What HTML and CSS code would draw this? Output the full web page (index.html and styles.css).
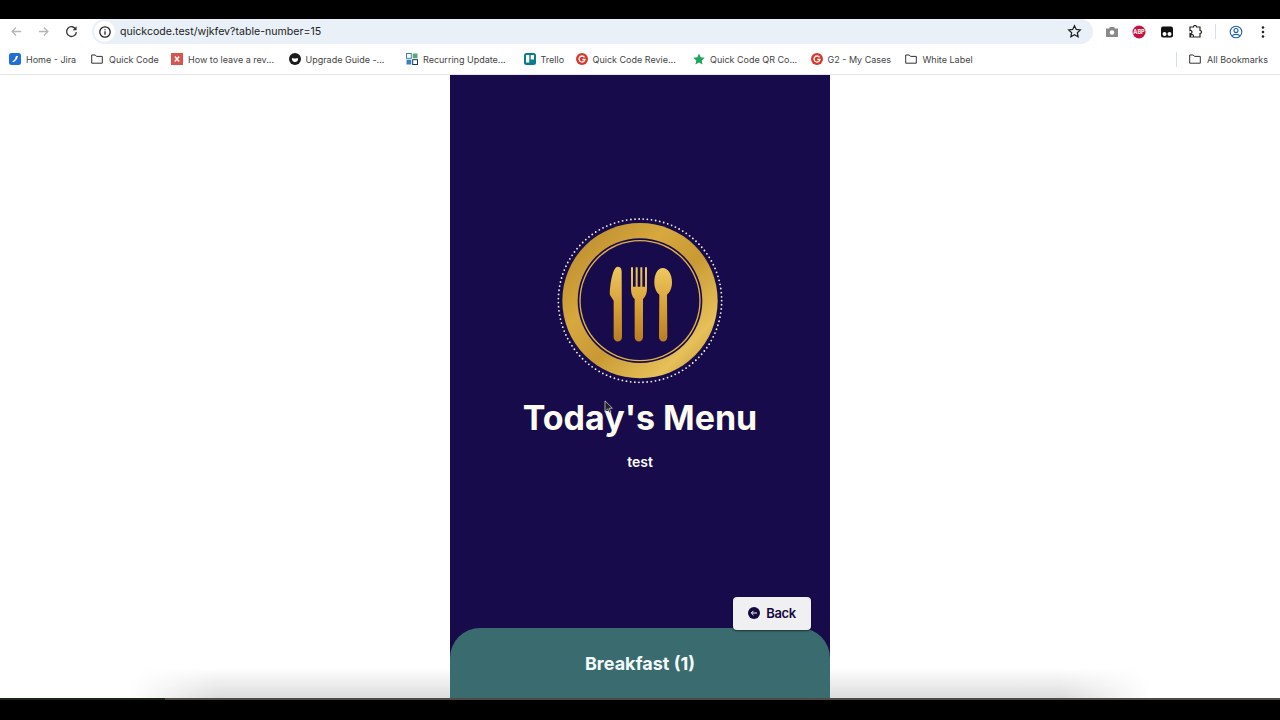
FILE: index.html
```html
<!DOCTYPE html>
<html lang="en">
<head>
    <meta charset="UTF-8">
    <meta name="viewport" content="width=device-width, initial-scale=1.0">
    <title>Today's Menu</title>
    <link rel="stylesheet" href="styles.css">
</head>
<body>
    <div class="black-bar top"></div>

    <div class="toolbar">
        <svg class="nav-icon back-arrow" viewBox="0 0 16 16"><path d="M13 8H3.5M7.5 3.8 3.3 8l4.2 4.2" /></svg>
        <svg class="nav-icon fwd-arrow" viewBox="0 0 16 16"><path d="M3 8h9.5M8.5 3.8 12.7 8l-4.2 4.2" /></svg>
        <svg class="nav-icon reload" viewBox="0 0 16 16"><path d="M12.6 5.6A5.2 5.2 0 1 0 13.2 8.6" /><path class="solid" d="M13.4 2.4v4.2H9.2z" /></svg>
        <div class="address">
            <span class="info-badge">
                <svg viewBox="0 0 14 14"><circle cx="7" cy="7" r="5.2" fill="none" stroke="#222" stroke-width="1.3" /><path d="M7 6.3v3.4M7 4.2v1" stroke="#222" stroke-width="1.3" /></svg>
            </span>
            <span class="url">quickcode.test/wjkfev?table-number=15</span>
            <svg class="star" viewBox="0 0 16 16"><path d="M8 1.8l1.9 4 4.3.5-3.2 3 .9 4.3L8 11.5l-3.9 2.1.9-4.3-3.2-3 4.3-.5z" /></svg>
        </div>
        <div class="extensions">
            <svg class="ext" viewBox="0 0 14 14"><path fill="#8a8a8a" d="M1 3.5h3L5 2h4l1 1.500h3v8.500H1z" /><circle cx="7" cy="7.500" r="2.300" fill="#fff" /></svg>
            <svg class="ext" viewBox="0 0 14 14"><circle cx="7" cy="7" r="6.500" fill="#c8103e" /><text x="7" y="9" class="abp">ABP</text></svg>
            <svg class="ext" viewBox="0 0 14 14"><rect x="1" y="1.500" width="12" height="11" rx="2" fill="#111" /><circle cx="4.500" cy="9" r="2" fill="#fff" /><circle cx="9.500" cy="9" r="2" fill="#fff" /></svg>
            <svg class="ext puzzle" viewBox="0 0 14 14"><path d="M2 2h3.500a1.500 1.500 0 0 1 3 0H12v3.500a1.500 1.500 0 0 1 0 3V12H5c.8-1 .5-2.500-1-2.500S2.200 11 3 12H2V8.500c1.200 .5 2-.5 2-1.500S3 5 2 5.500z" /></svg>
            <span class="vsep"></span>
            <svg class="ext profile" viewBox="0 0 14 14"><circle cx="7" cy="7" r="5.800" /><circle cx="7" cy="5.500" r="2" /><path d="M3.200 11c1-2.200 6.600-2.200 7.600 0" /></svg>
            <svg class="ext dots" viewBox="0 0 14 14"><circle cx="7" cy="2.500" r="1.300" /><circle cx="7" cy="7" r="1.300" /><circle cx="7" cy="11.500" r="1.300" /></svg>
        </div>
    </div>

    <div class="bookmarks">
        <a class="bm w-jira"><svg viewBox="0 0 12 12"><rect width="12" height="12" rx="2.500" fill="#1f6fd6" /><path d="M3 9l3-3 1-3 2 0-1 3-3 3z" fill="#fff" /></svg>Home - Jira</a>
        <a class="bm w-code"><svg class="folder" viewBox="0 0 12 12"><path d="M.7 2h3.600l1.200 1.400h5.800v6.800H.7z" /></svg>Quick Code</a>
        <a class="bm w-long"><svg viewBox="0 0 12 12"><rect width="12" height="12" fill="#d9534f" /><path d="M3.800 3.500l4.400 5M8.200 3.500l-4.400 5" stroke="#fff" stroke-width="1.500" /></svg>How to leave a rev...</a>
        <a class="bm w-long"><svg viewBox="0 0 12 12"><circle cx="6" cy="6" r="6" fill="#1b1b1b" /><path d="M3 5c1 .6 5 .6 6 0 .4 3-1.400 4-3 4S2.600 8 3 5z" fill="#fff" /></svg>Upgrade Guide -...</a>
        <a class="bm w-long"><svg viewBox="0 0 12 12"><rect x=".5" y=".5" width="4.800" height="4.800" fill="none" stroke="#3f7fb5" /><rect x="6.700" y=".5" width="4.800" height="4.800" fill="#5aa86f" /><rect x=".5" y="6.700" width="4.800" height="4.800" fill="#3f7fb5" /><rect x="6.700" y="6.700" width="4.800" height="4.800" fill="none" stroke="#17375e" /></svg>Recurring Update...</a>
        <a class="bm w-trello"><svg viewBox="0 0 12 12"><rect width="12" height="12" rx="2.500" fill="#0b7a8a" /><rect x="2" y="2" width="3.300" height="7.500" fill="#fff" /><rect x="6.700" y="2" width="3.300" height="4.500" fill="#fff" /></svg>Trello</a>
        <a class="bm w-long"><svg viewBox="0 0 12 12"><circle cx="6" cy="6" r="6" fill="#d8372c" /><path d="M8.500 4.300A3 3 0 1 0 9 6.500H6.300" fill="none" stroke="#fff" stroke-width="1.300" /></svg>Quick Code Revie...</a>
        <a class="bm w-long"><svg viewBox="0 0 12 12"><path d="M6 .5l1.700 3.800 4.100.4-3.100 2.700.9 4.100L6 9.400l-3.600 2.100.9-4.100L.2 4.700l4.100-.4z" fill="#1fa45b" /></svg>Quick Code QR Co...</a>
        <a class="bm w-g2"><svg viewBox="0 0 12 12"><circle cx="6" cy="6" r="6" fill="#d8372c" /><path d="M8.500 4.300A3 3 0 1 0 9 6.500H6.300" fill="none" stroke="#fff" stroke-width="1.300" /></svg>G2 - My Cases</a>
        <a class="bm"><svg class="folder" viewBox="0 0 12 12"><path d="M.7 2h3.600l1.200 1.400h5.800v6.800H.7z" /></svg>White Label</a>
        <span class="bm-right">
            <span class="vsep"></span>
            <a class="bm"><svg class="folder" viewBox="0 0 12 12"><path d="M.7 2h3.600l1.200 1.400h5.800v6.800H.7z" /></svg>All Bookmarks</a>
        </span>
    </div>

    <div class="viewport">
        <div class="window-shadow"></div>
        <main class="phone">
            <section class="hero">
                <svg class="logo" viewBox="0 0 540 540">
                    <defs>
                        <linearGradient id="gold" x1="0" y1="0" x2="1" y2="1">
                            <stop offset="0" stop-color="#b5852a" />
                            <stop offset=".35" stop-color="#d6a83e" />
                            <stop offset=".55" stop-color="#c99a34" />
                            <stop offset=".8" stop-color="#e6c05a" />
                            <stop offset="1" stop-color="#c18f2e" />
                        </linearGradient>
                        <linearGradient id="cutlery" x1="0" y1="0" x2="0" y2="1">
                            <stop offset="0" stop-color="#edc860" />
                            <stop offset=".5" stop-color="#d9a338" />
                            <stop offset="1" stop-color="#b97d24" />
                        </linearGradient>
                    </defs>
                    <circle cx="270" cy="272" r="245" fill="none" stroke="#f4efe6" stroke-width="5.500" stroke-linecap="round" stroke-dasharray="0 12.500" />
                    <circle cx="270" cy="272" r="233" fill="url(#gold)" />
                    <circle cx="270" cy="272" r="187" fill="#180b4b" />
                    <circle cx="270" cy="272" r="182" fill="#e0b050" />
                    <circle cx="270" cy="272" r="178" fill="#180b4b" />
                    <path fill="url(#cutlery)" d="M203 170c8 0 12 5 12 15l1 197a12.500 12.500 0 0 1-25 0V272l-11-17c-2-15 6-85 23-85z" />
                    <path fill="url(#cutlery)" d="M243 172h6v58h8v-58h6v58h8v-58h6v58h8v-58h6v62c0 18-6 28-12 33v115a12.500 12.500 0 0 1-25 0V267c-6-5-11-15-11-33z" />
                    <path fill="url(#cutlery)" d="M338 174c17 0 28 20 28 43 0 18-7 31-15 37l1 128a12.500 12.500 0 0 1-25 0l1-128c-8-6-15-19-15-37 0-23 9-43 25-43z" />
                </svg>
                <h1 class="title">Today's Menu</h1>
                <p class="subtitle">test</p>
            </section>
            <div class="back-row">
                <button class="back-btn" type="button">
                    <svg viewBox="0 0 12 12"><circle cx="6" cy="6" r="6" fill="#150a3f" /><path d="M9 6H3.500M5.500 3.800 3.300 6l2.200 2.200" fill="none" stroke="#fff" stroke-width="1" /></svg>
                    Back
                </button>
            </div>
            <section class="category">Breakfast (1)</section>
        </main>
        <svg class="cursor" viewBox="0 0 10 16"><path d="M1 1v12l3-3 2 4.500 1.800-.8-2-4.300H9.500z" fill="#222" stroke="#ddd" stroke-width=".8" /></svg>
    </div>

    <div class="black-bar bottom"></div>
</body>
</html>
```

FILE: styles.css
```css
* {
    box-sizing: border-box;
}
html, body {
    height: 100%;
}
body {
    margin: 0;
    width: 1280px;
    height: 720px;
    overflow: hidden;
    display: flex;
    flex-direction: column;
    background-color: white;
    font-family: Inter, "Noto Sans", sans-serif;
}
.black-bar {
    background-color: black;
}
.black-bar.top {
    height: 19px;
}
.black-bar.bottom {
    height: 22px;
    background: linear-gradient(to right, #1c2414 165px, #4f4a45 165px) top / 100% 2px no-repeat, black;
}

/* browser chrome */
.toolbar {
    height: 25px;
    display: flex;
    align-items: center;
    padding-left: 9px;
    background-color: white;
}
.nav-icon {
    width: 15px;
    height: 15px;
    margin-right: 12px;
    fill: none;
    stroke: #b3b7bb;
    stroke-width: 1.4;
}
.nav-icon.reload {
    stroke: #333;
    margin-left: 1px;
    margin-right: 13px;
}
.nav-icon .solid {
    fill: #333;
    stroke: none;
}
.address {
    width: 1001px;
    height: 25px;
    display: flex;
    align-items: center;
    padding: 0 11px 0 2px;
    background-color: #e9f0f7;
    border-radius: 13px;
}
.info-badge {
    width: 21px;
    height: 21px;
    display: flex;
    align-items: center;
    justify-content: center;
    border-radius: 50%;
    background-color: white;
}
.info-badge svg {
    width: 14px;
    height: 14px;
}
.url {
    flex: 1;
    margin-left: 5px;
    padding-bottom: 1px;
    font-size: 10.600px;
    color: #222;
}
.star {
    width: 15px;
    height: 15px;
    fill: none;
    stroke: #222;
    stroke-width: 1.3;
}
.extensions {
    flex: 1;
    display: flex;
    align-items: center;
    padding-left: 11.500px;
}
.ext {
    width: 14px;
    height: 14px;
    margin-right: 13.700px;
}
.abp {
    font-size: 5.500px;
    font-weight: 700;
    fill: white;
    text-anchor: middle;
}
.puzzle {
    fill: none;
    stroke: #222;
    stroke-width: 1.200;
    margin-right: 13px;
}
.profile {
    fill: none;
    stroke: #1b5fb0;
    stroke-width: 1.100;
    margin-right: 13px;
}
.dots {
    fill: #222;
    margin: 0;
}
.vsep {
    width: 1px;
    height: 15px;
    background-color: #d3dfea;
}
.extensions .vsep {
    margin-right: 13px;
}
.bookmarks {
    height: 31px;
    display: flex;
    align-items: center;
    padding-left: 9px;
    font-size: 9px;
    color: #444;
    background-color: white;
    border-bottom: 1px solid #e6e6e6;
}
.bm {
    display: flex;
    align-items: center;
    gap: 5px;
    white-space: nowrap;
}
.w-jira {
    width: 82px;
}
.w-code {
    width: 80px;
}
.w-long {
    width: 117.500px;
}
.w-trello {
    width: 52px;
}
.w-g2 {
    width: 94px;
}
.bm svg {
    width: 12px;
    height: 12px;
    flex-shrink: 0;
}
.bm .folder {
    margin-right: 1px;
    fill: none;
    stroke: #333;
    stroke-width: 1;
}
.bm-right {
    margin-left: auto;
    margin-right: 12px;
    display: flex;
    align-items: center;
    gap: 12px;
}

/* page */
.viewport {
    flex: 1;
    position: relative;
    display: flex;
    justify-content: center;
    overflow: hidden;
    background-color: white;
}
.window-shadow {
    position: absolute;
    left: 130px;
    right: 130px;
    bottom: 0;
    height: 30px;
    background: linear-gradient(to bottom, rgba(200, 200, 200, 0), rgba(205, 205, 205, .7));
    -webkit-mask-image: linear-gradient(to right, transparent, black 90px, black calc(100% - 90px), transparent);
    mask-image: linear-gradient(to right, transparent, black 90px, black calc(100% - 90px), transparent);
}
.phone {
    position: relative;
    width: 380px;
    display: flex;
    flex-direction: column;
    background-color: #180b4b;
}
.hero {
    flex: 1;
    display: flex;
    flex-direction: column;
    align-items: center;
    padding-top: 135px;
    color: white;
}
.logo {
    width: 180px;
    height: 180px;
    flex-shrink: 0;
}
.title {
    margin: 6px 0 0;
    font-size: 34px;
    line-height: 44px;
    font-weight: 700;
    color: #fdfbf0;
}
.subtitle {
    margin: 13px 0 0;
    font-size: 14px;
    line-height: 17px;
    font-weight: 600;
}
.back-row {
    position: relative;
    z-index: 1;
    display: flex;
    justify-content: flex-end;
    padding-right: 19px;
    margin-bottom: -2px;
}
.back-btn {
    width: 78px;
    height: 33px;
    display: flex;
    align-items: center;
    justify-content: center;
    gap: 6px;
    padding: 0 0 1px;
    border: none;
    border-radius: 4px;
    background-color: #f0eff2;
    box-shadow: 0 1px 2px rgba(0, 0, 0, .55);
    font-family: inherit;
    font-size: 13px;
    letter-spacing: -.4px;
    font-weight: 600;
    color: #150a3f;
}
.back-btn svg {
    width: 12px;
    height: 12px;
}
.category {
    height: 70px;
    padding-top: 25px;
    text-align: center;
    font-size: 18px;
    line-height: 22px;
    font-weight: 700;
    color: #f3fbfa;
    background-color: #3a6b6e;
    border-radius: 30px 30px 0 0;
}
.cursor {
    position: absolute;
    left: 604px;
    top: 325px;
    width: 9px;
    height: 14px;
}
```
